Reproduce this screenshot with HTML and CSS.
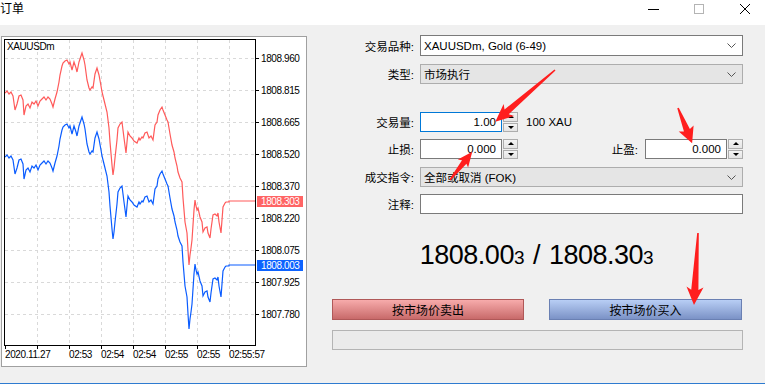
FILE: index.html
```html
<!DOCTYPE html>
<html lang="zh-CN">
<head>
    <meta charset="UTF-8">
    <meta name="viewport" content="width=device-width, initial-scale=1.0">
    <title>订单</title>
    <link rel="stylesheet" href="styles.css">
</head>
<body>
    <div class="window">
        <div class="titlebar">
            <span class="title">订单</span>
            <div class="controls">
                <span class="ctl"><svg width="11" height="10"><line x1="0" y1="5.5" x2="11" y2="5.5" stroke="#000"/></svg></span>
                <span class="ctl"><svg width="10" height="10"><rect x="0.5" y="0.5" width="9" height="9" fill="none" stroke="#b4b4b4"/></svg></span>
                <span class="ctl"><svg width="10" height="10"><path d="M0 0 L10 10 M10 0 L0 10" stroke="#000" fill="none"/></svg></span>
            </div>
        </div>

        <div class="main">
            <div class="chart-panel">
                <svg width="306" height="331" viewBox="1 36 306 331">
                    <defs>
                        <clipPath id="plot"><rect x="5" y="40" width="250" height="305"/></clipPath>
                        <path id="quote-line" fill="none" d="M5 93 L7 91 L9 94 L11 92 L13 96 L15 110 L17 104 L19 96 L21 95 L23 100 L24 115 L26 106 L28 104 L30 108 L32 102 L34 104 L36 101 L38 106 L40 101 L42 99 L44 97 L46 100 L48 97 L50 99 L52 104 L53 107 L55 99 L57 92 L59 82 L60 75 L62 66 L63 63 L65 61 L67 60 L69 64 L70 62 L72 70 L74 62 L76 68 L77 72 L79 62 L81 56 L82 53 L84 60 L85 65 L87 80 L89 88 L90 90 L92 87 L93 88 L95 74 L97 68 L99 75 L101 86 L102 92 L104 100 L107 112 L109 128 L110 142 L112 165 L113 175 L114 168 L115 158 L117 140 L118 128 L120 124 L122 122 L123 130 L124 138 L126 153 L127 142 L128 132 L130 136 L132 138 L134 141 L137 143 L139 138 L140 140 L142 137 L143 138 L145 133 L147 132 L149 138 L151 136 L153 140 L155 125 L157 122 L158 115 L160 110 L162 107 L163 110 L165 115 L167 120 L168 122 L170 134 L172 145 L174 152 L175 158 L177 166 L178 172 L180 178 L182 182 L183 198 L184 210 L185 222 L187 233 L188 250 L189 265 L190 255 L191 248 L192 240 L193 225 L194 210 L195 200 L196 206 L197 210 L198 208 L200 217 L202 222 L203 232 L205 228 L207 227 L208 233 L210 238 L211 229 L213 215 L215 214 L217 216 L218 213 L219 222 L221 233 L222 220 L223 207 L225 203 L226 202 L229 202 L229 201 L256 201"/>
                    </defs>

                    <rect x="1.5" y="36.5" width="305" height="330" fill="#fff" stroke="#a0a0a0"/>

                    <g class="grid">
                        <path d="M5 58.5 H255 M5 90.5 H255 M5 122.5 H255 M5 154.5 H255 M5 186.5 H255 M5 218.5 H255 M5 250.5 H255 M5 282.5 H255 M5 314.5 H255"/>
                        <path d="M37.5 40 V345 M69.5 40 V345 M101.5 40 V345 M133.5 40 V345 M165.5 40 V345 M197.5 40 V345 M229.5 40 V345"/>
                    </g>

                    <g clip-path="url(#plot)">
                        <use href="#quote-line" class="ask"/>
                        <use href="#quote-line" class="bid" transform="translate(0 64)"/>
                    </g>

                    <rect x="4.5" y="39.5" width="251" height="306" fill="none" stroke="#000"/>
                    <path class="ticks" d="M256 58.5 H259 M256 90.5 H259 M256 122.5 H259 M256 154.5 H259 M256 186.5 H259 M256 218.5 H259 M256 250.5 H259 M256 282.5 H259 M256 314.5 H259 M5.5 346 V349 M37.5 346 V349 M69.5 346 V349 M101.5 346 V349 M133.5 346 V349 M165.5 346 V349 M197.5 346 V349 M229.5 346 V349"/>

                    <text class="axis" x="7" y="50">XAUUSDm</text>

                    <g class="axis">
                        <text x="261" y="62">1808.960</text>
                        <text x="261" y="94">1808.815</text>
                        <text x="261" y="126">1808.665</text>
                        <text x="261" y="158">1808.520</text>
                        <text x="261" y="190">1808.370</text>
                        <text x="261" y="222">1808.220</text>
                        <text x="261" y="254">1808.075</text>
                        <text x="261" y="286">1807.925</text>
                        <text x="261" y="318">1807.780</text>
                    </g>

                    <rect x="257" y="196" width="46" height="11" fill="#ff6464"/>
                    <text class="axis tag" x="261" y="205">1808.303</text>
                    <rect x="257" y="260" width="46" height="11" fill="#0d63ff"/>
                    <text class="axis tag" x="261" y="269">1808.003</text>

                    <g class="axis">
                        <text x="5" y="358">2020.11.27</text>
                        <text x="69" y="358">02:53</text>
                        <text x="101" y="358">02:54</text>
                        <text x="133" y="358">02:54</text>
                        <text x="165" y="358">02:55</text>
                        <text x="197" y="358">02:55</text>
                        <text x="229" y="358">02:55:57</text>
                    </g>
                </svg>
            </div>

            <div class="order">
                <div class="row r-symbol">
                    <label>交易品种:</label>
                    <div class="select"><span>XAUUSDm, Gold (6-49)</span><svg class="chev" width="9" height="5"><path d="M0.5 0.5 L4.5 4.5 L8.5 0.5"/></svg></div>
                </div>
                <div class="row r-type">
                    <label>类型:</label>
                    <div class="select gray"><span>市场执行</span><svg class="chev" width="9" height="5"><path d="M0.5 0.5 L4.5 4.5 L8.5 0.5"/></svg></div>
                </div>
                <div class="row r-volume">
                    <label>交易量:</label>
                    <div class="field">
                        <div class="num focus">1.00</div>
                        <div class="spin"><span><i class="up"></i></span><span><i class="down"></i></span></div>
                        <span class="unit">100 XAU</span>
                    </div>
                </div>
                <div class="row r-stops">
                    <label>止损:</label>
                    <div class="field">
                        <div class="num">0.000</div>
                        <div class="spin"><span><i class="up"></i></span><span><i class="down"></i></span></div>
                        <span class="tp-label">止盈:</span>
                        <div class="num">0.000</div>
                        <div class="spin"><span><i class="up"></i></span><span><i class="down"></i></span></div>
                    </div>
                </div>
                <div class="row r-fill">
                    <label>成交指令:</label>
                    <div class="select gray"><span>全部或取消 (FOK)</span><svg class="chev" width="9" height="5"><path d="M0.5 0.5 L4.5 4.5 L8.5 0.5"/></svg></div>
                </div>
                <div class="row r-comment">
                    <label>注释:</label>
                    <div class="select"></div>
                </div>

                <div class="quote">1808.00<small>3</small><span class="sep">/</span>1808.30<small>3</small></div>

                <div class="trade">
                    <div class="btn sell">按市场价卖出</div>
                    <div class="btn buy">按市场价买入</div>
                </div>
                <div class="progress"></div>
            </div>
        </div>

        <!-- screenshot annotations -->
        <svg class="arrows" width="765" height="384">
            <polygon points="0,-0.8 64,-3.2 61,-8 79,0 61,8 64,3.2 0,0.8" transform="translate(555 70) rotate(139.1)"/>
            <polygon points="0,-0.8 23,-2.8 21,-6.5 36,0 21,6.5 23,2.8 0,0.8" transform="translate(450 180) rotate(-51.8)"/>
            <polygon points="0,-0.8 24,-3.2 22,-8 38,0 22,8 24,3.2 0,0.8" transform="translate(678 108) rotate(68.2)"/>
            <polygon points="0,-0.8 57,-3.6 54,-8.5 72,0 54,8.5 57,3.6 0,0.8" transform="translate(698 233) rotate(93.2)"/>
        </svg>
    </div>
</body>
</html>
```

FILE: styles.css
```css
body {
    margin: 0;
    background-color: #f0f0f0;
    font-family: "Liberation Sans", "Noto Sans CJK SC", sans-serif;
    color: #000;
    overflow: hidden;
}

.window {
    position: relative;
    width: 765px;
    height: 384px;
    box-sizing: border-box;
    border-bottom: 1px solid #2e7bd0;
    overflow: hidden;
}

.titlebar {
    height: 25px;
    background: #fff;
    display: flex;
    align-items: flex-start;
}

.title {
    font-size: 12px;
    line-height: 19px;
}

.controls {
    margin-left: auto;
    margin-right: -3px;
    display: flex;
}

.ctl {
    width: 46px;
    height: 10px;
    margin-top: 4px;
    display: flex;
    justify-content: center;
}

.main {
    display: flex;
    align-items: flex-start;
    padding-top: 10px;
}

.chart-panel {
    margin: 1px 0 0 1px;
    width: 306px;
    height: 331px;
}

.chart-panel svg {
    display: block;
}

.grid path {
    stroke: #d9d9d9;
    stroke-dasharray: 3 3;
    fill: none;
}

.ticks {
    stroke: #000;
    fill: none;
}

.ask {
    stroke: #ff5a5a;
    stroke-width: 1.2;
}

.bid {
    stroke: #0a5cff;
    stroke-width: 1.2;
}

.axis {
    font-family: "Liberation Sans", sans-serif;
    font-size: 10px;
    letter-spacing: -0.4px;
    fill: #000;
}

.axis.tag {
    fill: #fff;
}

/* order form */
.order {
    width: 413px;
    margin-left: 23px;
    font-size: 11.5px;
}

.row {
    display: grid;
    grid-template-columns: 84px 323px;
    column-gap: 6px;
    align-items: center;
    height: 20px;
}

.row label {
    text-align: right;
}

.r-symbol {
    height: 21px;
    margin-bottom: 8px;
}

.r-type {
    margin-bottom: 28px;
}

.r-volume {
    margin-bottom: 7px;
}

.r-stops {
    margin-bottom: 8px;
}

.r-fill {
    margin-bottom: 7px;
}

.select {
    height: 100%;
    box-sizing: border-box;
    border: 1px solid #7a7a7a;
    background: #fff;
    display: flex;
    align-items: center;
    justify-content: space-between;
    padding: 0 6px 0 3px;
}

.select.gray {
    background: #e5e5e5;
    border-color: #adadad;
}

.chev path {
    fill: none;
    stroke: #555;
}

.field {
    display: flex;
    align-items: center;
    height: 20px;
}

.num {
    width: 82px;
    height: 20px;
    box-sizing: border-box;
    border: 1px solid #7a7a7a;
    background: #fff;
    text-align: right;
    padding-right: 5px;
    line-height: 18px;
}

.num.focus {
    border-color: #0078d7;
}

.spin {
    width: 15px;
    height: 20px;
    margin-left: 1px;
    display: flex;
    flex-direction: column;
    gap: 1px;
}

.spin span {
    flex: 1;
    border: 1px solid #adadad;
    background: linear-gradient(#f4f4f4, #e4e4e4);
    display: flex;
    align-items: center;
    justify-content: center;
}

.spin i {
    width: 0;
    height: 0;
    border-left: 3px solid transparent;
    border-right: 3px solid transparent;
}

.spin .up {
    border-bottom: 3px solid #000;
}

.spin .down {
    border-top: 3px solid #000;
}

.unit {
    margin-left: 8px;
}

.tp-label {
    margin-left: auto;
    margin-right: 7px;
}

.quote {
    margin-top: 25px;
    height: 32px;
    line-height: 32px;
    text-align: center;
    font-size: 27px;
    letter-spacing: -0.5px;
}

.quote small {
    font-size: 19px;
}

.quote .sep {
    margin: 0 9px;
}

.trade {
    display: flex;
    gap: 25px;
    padding-left: 2px;
    margin-top: 28px;
}

.btn {
    height: 21px;
    box-sizing: border-box;
    width: 192px;
    font-size: 12px;
    display: flex;
    align-items: center;
    justify-content: center;
    border: 1px solid;
}

.sell {
    background: linear-gradient(#f7abab, #c86a6a);
    border-color: #b05858;
}

.buy {
    width: 193px;
    background: linear-gradient(#b8cef5, #7b92c6);
    border-color: #6a80b3;
}

.progress {
    margin: 10px 0 0 2px;
    width: 411px;
    height: 20px;
    box-sizing: border-box;
    border: 1px solid #b4b4b4;
    background: #ebebeb;
}

.arrows {
    position: absolute;
    top: 0;
    left: 0;
    pointer-events: none;
}

.arrows polygon {
    fill: #ff1e1e;
}
```
